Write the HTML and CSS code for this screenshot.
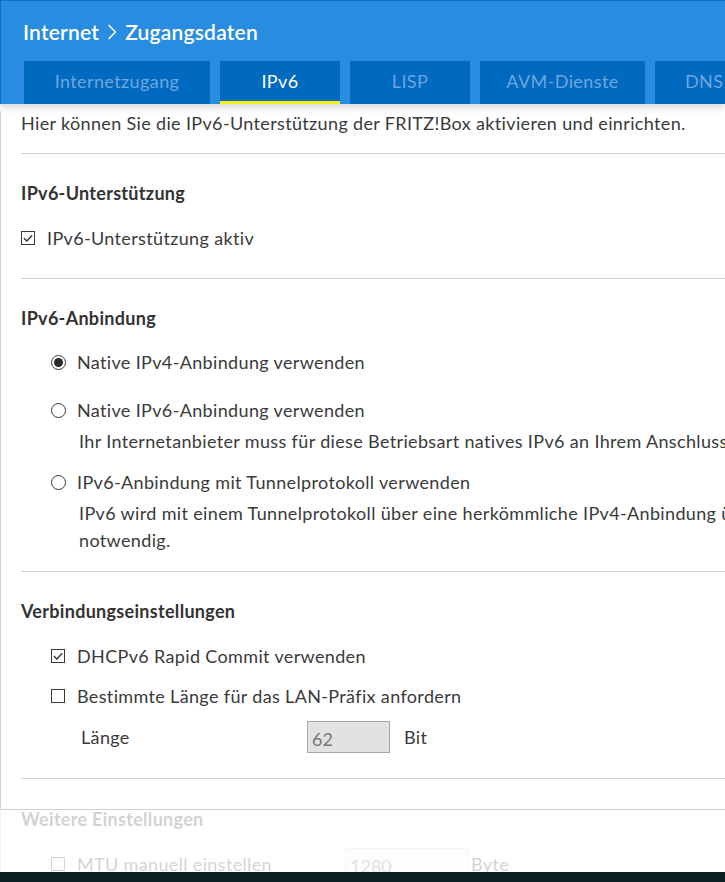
FILE: index.html
```html
<!DOCTYPE html>
<html lang="de">
<head>
    <meta charset="UTF-8">
    <title>Internet - Zugangsdaten</title>
    <link rel="stylesheet" href="styles.css">
</head>
<body>

<div class="page">
    <header class="top">
        <h1 class="title">
            Internet
            <svg class="crumb" width="10" height="16" viewBox="0 0 10 16"><path d="M1.5 1 L8.5 8 L1.5 15" fill="none" stroke="#fff" stroke-width="1.4"/></svg>
            Zugangsdaten
        </h1>
        <nav class="tabs">
            <a class="tab tab-wide">Internetzugang</a>
            <a class="tab active">IPv6</a>
            <a class="tab">LISP</a>
            <a class="tab tab-mid">AVM-Dienste</a>
            <a class="tab tab-last">DNS-Server</a>
        </nav>
    </header>

    <main class="content">
        <p class="intro">Hier können Sie die IPv6-Unterstützung der FRITZ!Box aktivieren und einrichten.</p>

        <!-- IPv6-Unterstützung -->
        <section class="block b1">
            <h2>IPv6-Unterstützung</h2>
            <label class="row">
                <span class="box checked"><svg width="14" height="14" viewBox="0 0 14 14"><path d="M2.8 7 L5.8 10 L11.2 4.2" fill="none" stroke="#333" stroke-width="1.3"/></svg></span>
                IPv6-Unterstützung aktiv
            </label>
        </section>

        <!-- IPv6-Anbindung -->
        <section class="block b2">
            <h2>IPv6-Anbindung</h2>
            <label class="row indent first-radio">
                <span class="radio on"></span>
                Native IPv4-Anbindung verwenden
            </label>
            <label class="row indent radio-row">
                <span class="radio"></span>
                Native IPv6-Anbindung verwenden
            </label>
            <p class="hint">Ihr Internetanbieter muss für diese Betriebsart natives IPv6 an Ihrem Anschluss bereitstellen.</p>
            <label class="row indent radio-row-3">
                <span class="radio"></span>
                IPv6-Anbindung mit Tunnelprotokoll verwenden
            </label>
            <p class="hint">IPv6 wird mit einem Tunnelprotokoll über eine herkömmliche IPv4-Anbindung übertragen. Dafür ist ein Tunnel-Endpunkt<br>notwendig.</p>
        </section>

        <!-- Verbindungseinstellungen -->
        <section class="block b3">
            <h2>Verbindungseinstellungen</h2>
            <label class="row indent">
                <span class="box checked"><svg width="14" height="14" viewBox="0 0 14 14"><path d="M2.8 7 L5.8 10 L11.2 4.2" fill="none" stroke="#333" stroke-width="1.3"/></svg></span>
                DHCPv6 Rapid Commit verwenden
            </label>
            <label class="row indent second-cb">
                <span class="box"></span>
                Bestimmte Länge für das LAN-Präfix anfordern
            </label>
            <div class="field">
                <span class="field-label">Länge</span>
                <input class="num" type="text" value="62" disabled>
                <span class="unit">Bit</span>
            </div>
        </section>

        <!-- Weitere Einstellungen -->
        <section class="block b4">
            <h2>Weitere Einstellungen</h2>
            <div class="field mtu">
                <span class="box"></span>
                <span class="mtu-label">MTU manuell einstellen</span>
                <input class="num wide" type="text" value="1280" disabled>
                <span class="unit tight">Byte</span>
            </div>
        </section>
    </main>

    <div class="fade"></div>
    <div class="taskbar"></div>
</div>

</body>
</html>
```

FILE: styles.css
```css
body {
    margin: 0;
    padding: 0;
    background: #ffffff;
    font-family: "Lato", "Open Sans", sans-serif;
    color: #3a3a3a;
    overflow: hidden;
}

.page {
    position: relative;
    width: 725px;
    height: 882px;
    overflow: hidden;
}

.top {
    background-color: #288de0;
    border-top: 1px solid #0f6fc2;
    border-left: 1px solid #0f6fc2;
    height: 103px;
    box-shadow: 0 3px 8px rgba(0, 0, 0, 0.18);
    position: relative;
    z-index: 2;
}

.title {
    margin: 0;
    padding: 2px 0 0 22px;
    height: 60px;
    box-sizing: border-box;
    font-size: 21px;
    font-weight: 600;
    color: #ffffff;
    display: flex;
    align-items: center;
    gap: 8px;
    line-height: 24px;
    letter-spacing: 0.2px;
}

.tabs {
    display: flex;
    gap: 10px;
    padding-left: 23px;
    white-space: nowrap;
}

.tab {
    display: flex;
    align-items: center;
    justify-content: center;
    height: 43px;
    width: 120px;
    flex-shrink: 0;
    background-color: #0069c0;
    color: #6ea6dc;
    font-size: 18px;
    letter-spacing: 0.4px;
    box-sizing: border-box;
    padding-bottom: 4px;
}

.tab-wide {
    width: 186px;
}

.tab-mid {
    width: 165px;
}

.tab-last {
    width: 120px;
    justify-content: flex-start;
    padding-left: 30px;
}

.tab.active {
    color: #ffffff;
    border-bottom: 3px solid #fff200;
    padding-bottom: 1px;
}

.content {
    border-left: 1px solid #d4d4d4;
    padding-left: 20px;
    width: 900px;
    white-space: nowrap;
    font-size: 18px;
    letter-spacing: 0.35px;
}

.intro {
    margin: 7px 0 0 0;
    line-height: 24px;
}

.block {
    border-top: 1px solid #d2d2d2;
    padding-top: 27px;
}

.b1 {
    margin-top: 18px;
}

.b2 {
    margin-top: 28px;
}

.b3 {
    margin-top: 17px;
}

.b4 {
    margin-top: 25px;
    padding-top: 28px;
}

.block h2 {
    margin: 0;
    font-size: 18px;
    font-weight: 700;
    line-height: 24px;
    color: #333333;
    letter-spacing: 0.3px;
}

.row {
    display: flex;
    align-items: center;
    line-height: 24px;
    margin-top: 21px;
}

.row.indent {
    padding-left: 30px;
}

.first-radio {
    margin-top: 20px;
}

.radio-row {
    margin-top: 24px;
}

.radio-row-3 {
    margin-top: 15px;
}

.second-cb {
    margin-top: 16px;
}

.box {
    width: 14px;
    height: 14px;
    border: 1px solid #3a3a3a;
    margin-right: 12px;
    flex-shrink: 0;
    position: relative;
    box-sizing: border-box;
}

.box svg {
    position: absolute;
    left: -1px;
    top: -1px;
}

.radio {
    width: 15px;
    height: 15px;
    border: 1px solid #3a3a3a;
    border-radius: 50%;
    margin-right: 11px;
    box-sizing: border-box;
    flex-shrink: 0;
    display: flex;
    align-items: center;
    justify-content: center;
}

.radio.on::after {
    content: "";
    width: 9px;
    height: 9px;
    border-radius: 50%;
    background: #2a2a2a;
}

.hint {
    margin: 6px 0 0 0;
    padding-left: 58px;
    line-height: 27px;
}

.field {
    display: flex;
    align-items: center;
    margin-top: 13px;
    padding-left: 60px;
}

.field-label {
    width: 226px;
}

.num {
    width: 83px;
    height: 32px;
    box-sizing: border-box;
    border: 1px solid #a8a8a8;
    background: #e2e2e2;
    font-family: inherit;
    font-size: 18px;
    color: #777777;
    padding: 4px 0 0 4px;
    margin: 0;
}

.unit {
    margin-left: 14px;
}

.field.mtu {
    margin-top: 17px;
    padding-left: 30px;
}

.mtu-label {
    width: 268px;
}

.num.wide {
    width: 124px;
    background: #f4f4f4;
    border-color: #d0d0d0;
}

.unit.tight {
    margin-left: 2px;
}

.fade {
    position: absolute;
    left: 0;
    right: 0;
    top: 809px;
    bottom: 0;
    border-top: 1px solid #cfcfcf;
    background: rgba(255, 255, 255, 0.78);
    z-index: 3;
}

.taskbar {
    position: absolute;
    left: 0;
    right: 0;
    bottom: 0;
    height: 10px;
    background: #0b1f23;
    z-index: 4;
}
```
